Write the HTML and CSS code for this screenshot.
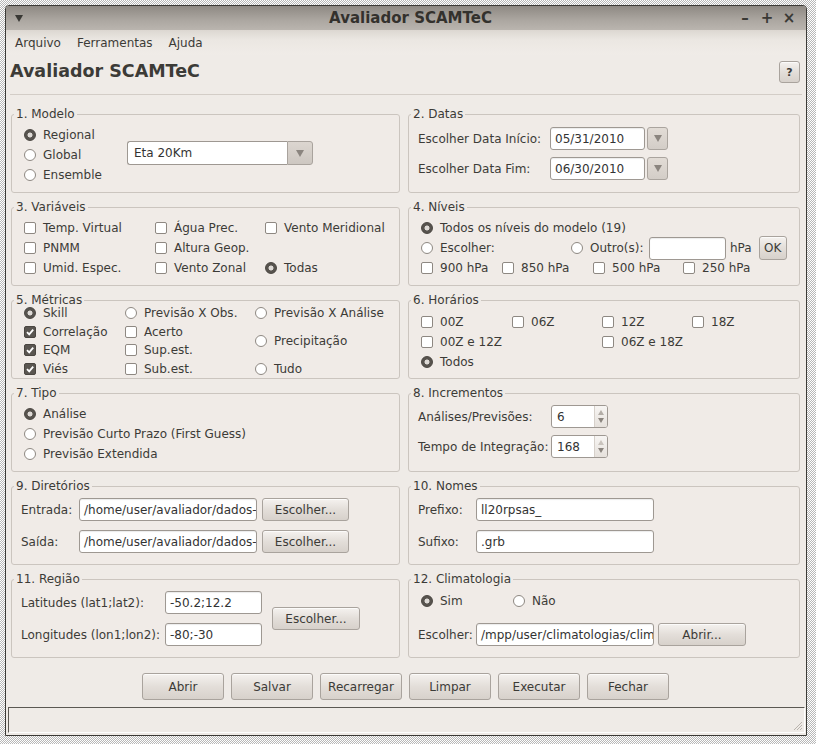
FILE: index.html
```html
<!DOCTYPE html>
<html lang="pt">
<head>
<meta charset="utf-8">
<title>Avaliador SCAMTeC</title>
<link rel="stylesheet" href="styles.css">
</head>
<body>
<div class="window">
  <div class="titlebar">
    <span class="tb-left"><svg width="8" height="7" viewBox="0 0 8 7"><path d="M0 0h8L4 7z" fill="#3a3935"/></svg></span>
    <span class="tb-title">Avaliador SCAMTeC</span>
    <span class="tb-ctrls"><span class="tb-c">&#8211;</span><span class="tb-c">+</span><span class="tb-c">&#215;</span></span>
  </div>
  <div class="menubar"><span>Arquivo</span><span>Ferramentas</span><span>Ajuda</span></div>
  <div class="main">
    <div class="header">
      <h1>Avaliador SCAMTeC</h1>
      <button class="btn help">?</button>
    </div>
    <div class="grid">
      <fieldset class="group">
        <legend>1. Modelo</legend>
        <div class="g1">
          <div class="rows g1-col">
            <div class="opt"><span class="radio on"></span>Regional</div>
            <div class="opt"><span class="radio"></span>Global</div>
            <div class="opt"><span class="radio"></span>Ensemble</div>
          </div>
          <div class="combo"><span class="combo-field">Eta 20Km</span><span class="combo-btn"><svg width="8" height="7" viewBox="0 0 8 7"><path d="M0 0h8L4 7z" fill="#8b857f"/></svg></span></div>
        </div>
      </fieldset>
      <fieldset class="group">
        <legend>2. Datas</legend>
        <div class="g2">
          <span class="lbl">Escolher Data Início:</span>
          <span class="field">05/31/2010</span>
          <span class="dd-btn"><svg width="8" height="7" viewBox="0 0 8 7"><path d="M0 0h8L4 7z" fill="#8b857f"/></svg></span>
          <span class="lbl">Escolher Data Fim:</span>
          <span class="field">06/30/2010</span>
          <span class="dd-btn"><svg width="8" height="7" viewBox="0 0 8 7"><path d="M0 0h8L4 7z" fill="#8b857f"/></svg></span>
        </div>
      </fieldset>
      <fieldset class="group">
        <legend>3. Variáveis</legend>
        <div class="g3">
          <div class="opt"><span class="check"></span>Temp. Virtual</div>
          <div class="opt"><span class="check"></span>Água Prec.</div>
          <div class="opt"><span class="check"></span>Vento Meridional</div>
          <div class="opt"><span class="check"></span>PNMM</div>
          <div class="opt"><span class="check"></span>Altura Geop.</div>
          <div></div>
          <div class="opt"><span class="check"></span>Umid. Espec.</div>
          <div class="opt"><span class="check"></span>Vento Zonal</div>
          <div class="opt"><span class="radio on"></span>Todas</div>
        </div>
      </fieldset>
      <fieldset class="group">
        <legend>4. Níveis</legend>
        <div class="g4">
          <div class="row"><div class="opt"><span class="radio on"></span>Todos os níveis do modelo (19)</div></div>
          <div class="row">
            <div class="opt w150"><span class="radio"></span>Escolher:</div>
            <div class="opt w78"><span class="radio"></span>Outro(s):</div>
            <span class="field f-outro"></span>
            <span class="hpa">hPa</span>
            <button class="btn ok">OK</button>
          </div>
          <div class="row">
            <div class="opt w81"><span class="check"></span>900 hPa</div>
            <div class="opt w91"><span class="check"></span>850 hPa</div>
            <div class="opt w90"><span class="check"></span>500 hPa</div>
            <div class="opt"><span class="check"></span>250 hPa</div>
          </div>
        </div>
      </fieldset>
      <fieldset class="group">
        <legend>5. Métricas</legend>
        <div class="g5">
          <div class="col c1">
            <div class="opt"><span class="radio on"></span>Skill</div>
            <div class="opt"><span class="check on"><svg width="10" height="10" viewBox="0 0 10 10"><path d="M2 5.2L4.2 7.4L8.2 2.6" stroke="#fff" stroke-width="1.8" fill="none"/></svg></span>Correlação</div>
            <div class="opt"><span class="check on"><svg width="10" height="10" viewBox="0 0 10 10"><path d="M2 5.2L4.2 7.4L8.2 2.6" stroke="#fff" stroke-width="1.8" fill="none"/></svg></span>EQM</div>
            <div class="opt"><span class="check on"><svg width="10" height="10" viewBox="0 0 10 10"><path d="M2 5.2L4.2 7.4L8.2 2.6" stroke="#fff" stroke-width="1.8" fill="none"/></svg></span>Viés</div>
          </div>
          <div class="col c2">
            <div class="opt"><span class="radio"></span>Previsão X Obs.</div>
            <div class="opt"><span class="check"></span>Acerto</div>
            <div class="opt"><span class="check"></span>Sup.est.</div>
            <div class="opt"><span class="check"></span>Sub.est.</div>
          </div>
          <div class="col c3">
            <div class="opt"><span class="radio"></span>Previsão X Análise</div>
            <div class="opt"><span class="radio"></span>Precipitação</div>
            <div class="opt"><span class="radio"></span>Tudo</div>
          </div>
        </div>
      </fieldset>
      <fieldset class="group">
        <legend>6. Horários</legend>
        <div class="g6">
          <div class="opt"><span class="check"></span>00Z</div>
          <div class="opt"><span class="check"></span>06Z</div>
          <div class="opt"><span class="check"></span>12Z</div>
          <div class="opt"><span class="check"></span>18Z</div>
          <div class="opt span2"><span class="check"></span>00Z e 12Z</div>
          <div class="opt span2"><span class="check"></span>06Z e 18Z</div>
          <div class="opt"><span class="radio on"></span>Todos</div>
        </div>
      </fieldset>
      <fieldset class="group">
        <legend>7. Tipo</legend>
        <div class="rows g7">
          <div class="opt"><span class="radio on"></span>Análise</div>
          <div class="opt"><span class="radio"></span>Previsão Curto Prazo (First Guess)</div>
          <div class="opt"><span class="radio"></span>Previsão Extendida</div>
        </div>
      </fieldset>
      <fieldset class="group">
        <legend>8. Incrementos</legend>
        <div class="g8">
          <span class="lbl">Análises/Previsões:</span>
          <span class="spin"><span class="spin-val">6</span><span class="spin-arrows"><svg width="6" height="5" viewBox="0 0 6 5"><path d="M0 5h6L3 0z" fill="#b3ada7"/></svg><svg width="6" height="5" viewBox="0 0 6 5"><path d="M0 0h6L3 5z" fill="#8b857f"/></svg></span></span>
          <span class="lbl">Tempo de Integração:</span>
          <span class="spin"><span class="spin-val">168</span><span class="spin-arrows"><svg width="6" height="5" viewBox="0 0 6 5"><path d="M0 5h6L3 0z" fill="#c9c3bd"/></svg><svg width="6" height="5" viewBox="0 0 6 5"><path d="M0 0h6L3 5z" fill="#8b857f"/></svg></span></span>
        </div>
      </fieldset>
      <fieldset class="group">
        <legend>9. Diretórios</legend>
        <div class="g9">
          <span class="lbl">Entrada:</span>
          <span class="field">/home/user/avaliador/dados-</span>
          <button class="btn choose">Escolher...</button>
          <span class="lbl">Saída:</span>
          <span class="field">/home/user/avaliador/dados-</span>
          <button class="btn choose">Escolher...</button>
        </div>
      </fieldset>
      <fieldset class="group">
        <legend>10. Nomes</legend>
        <div class="g10">
          <span class="lbl">Prefixo:</span>
          <span class="field">ll20rpsas_</span>
          <span class="lbl">Sufixo:</span>
          <span class="field">.grb</span>
        </div>
      </fieldset>
      <fieldset class="group">
        <legend>11. Região</legend>
        <div class="g11">
          <span class="lbl">Latitudes (lat1;lat2):</span>
          <span class="field">-50.2;12.2</span>
          <button class="btn choose reg">Escolher...</button>
          <span class="lbl">Longitudes (lon1;lon2):</span>
          <span class="field">-80;-30</span>
        </div>
      </fieldset>
      <fieldset class="group">
        <legend>12. Climatologia</legend>
        <div class="g12">
          <div class="row r-clim">
            <div class="opt w92"><span class="radio on"></span>Sim</div>
            <div class="opt"><span class="radio"></span>Não</div>
          </div>
          <div class="g12-form">
            <span class="lbl">Escolher:</span>
            <span class="field">/mpp/user/climatologias/clim</span>
            <button class="btn open">Abrir...</button>
          </div>
        </div>
      </fieldset>
    </div>
    <div class="actions">
      <button class="btn act">Abrir</button>
      <button class="btn act">Salvar</button>
      <button class="btn act">Recarregar</button>
      <button class="btn act">Limpar</button>
      <button class="btn act">Executar</button>
      <button class="btn act">Fechar</button>
    </div>
  </div>
  <div class="statusbar"><svg class="grip" width="10" height="10" viewBox="0 0 10 10"><path d="M9 1L1 9M9 4L4 9M9 7L7 9" stroke="#b9b3ad" stroke-width="1"/></svg></div>
</div>
</body>
</html>
```

FILE: styles.css
```css
* { box-sizing: border-box; }
html, body { margin: 0; padding: 0; }
body {
  width: 816px;
  height: 744px;
  overflow: hidden;
  font-family: "DejaVu Sans", "Noto Sans", sans-serif;
  font-size: 12px;
  color: #3c3b37;
  background: repeating-conic-gradient(#b8b8b8 0 25%, #ffffff 0 50%) 0 0 / 2px 2px;
}
.window {
  margin: 5px 0 0 5px;
  width: 802px;
  height: 731px;
  border: 1px solid #3b3a36;
  border-radius: 4px 4px 0 0;
  background: #efebe7;
  display: flex;
  flex-direction: column;
  overflow: hidden;
}
.titlebar {
  flex: none;
  height: 24px;
  display: grid;
  grid-template-columns: 1fr auto 1fr;
  align-items: center;
  background: linear-gradient(#8e8983, #aca7a1 60%, #bab5af);
  padding: 0 6px 0 9px;
}
.tb-left { display: flex; align-items: center; }
.tb-title { font-weight: bold; font-size: 15px; color: #33312d; margin-left: 6px; }
.tb-ctrls { display: flex; justify-content: flex-end; }
.tb-c { width: 22px; text-align: center; font-weight: bold; font-size: 15px; color: #3a3935; line-height: 20px; }
.menubar {
  flex: none;
  height: 25px;
  display: flex;
  align-items: center;
  gap: 16px;
  padding: 0 0 0 9px;
  background: linear-gradient(#dcd7d1, #ebe7e2 40%, #f0ece8);
  font-size: 12px;
}
.main { flex: none; padding: 0 6px 0 5px; }
.header {
  height: 40px;
  margin: 0 -2px 0 -1px;
  border-bottom: 1px solid #d3cdc7;
  display: flex;
  justify-content: space-between;
  align-items: flex-start;
}
h1 {
  margin: 6px 0 0 0;
  font-size: 17.5px;
  line-height: 21px;
  font-weight: bold;
  color: #3c3b37;
}
.btn {
  font-family: "DejaVu Sans", "Noto Sans", sans-serif;
  font-size: 12px;
  color: #3c3b37;
  background: linear-gradient(#f5f2ef, #e3ded9 50%, #d7d1cb);
  border: 1px solid #a9a39d;
  border-radius: 3px;
  padding: 0;
  box-shadow: inset 0 1px 0 rgba(255,255,255,0.7);
}
.help {
  margin: 6px 2px 0 0;
  width: 21px;
  height: 22px;
  font-weight: bold;
  font-size: 11px;
}
.grid {
  margin-top: 12px;
  display: grid;
  grid-template-columns: 389px 392px;
  grid-template-rows: repeat(6, 86px);
  column-gap: 8px;
  row-gap: 7px;
}
.group {
  margin: 0;
  padding: 0;
  min-width: 0;
  height: 86px;
  border: 1px solid #cbc5bf;
  border-radius: 3px;
  background: #f0ebe7;
}
legend {
  padding: 0 2px;
  margin-left: 2px;
  font-size: 12px;
  line-height: 14px;
  color: #3c3b37;
}
.opt {
  display: flex;
  align-items: center;
  gap: 7px;
  white-space: nowrap;
  height: 20px;
}
.radio {
  flex: none;
  width: 12px;
  height: 12px;
  border-radius: 50%;
  border: 1px solid #8e8882;
  background: #ffffff;
}
.radio.on {
  border-color: #4a4641;
  background: radial-gradient(circle, #dedad6 0 2.2px, #57534e 2.8px);
}
.check {
  flex: none;
  width: 12px;
  height: 12px;
  border-radius: 2px;
  border: 1px solid #8e8882;
  background: #ffffff;
  display: flex;
  align-items: center;
  justify-content: center;
}
.check.on { background: #5a5651; border-color: #4a4641; }
.field {
  display: flex;
  align-items: center;
  height: 23px;
  background: #ffffff;
  border: 1px solid #9e9892;
  border-radius: 3px;
  padding-left: 4px;
  overflow: hidden;
  white-space: nowrap;
  color: #333333;
  box-shadow: inset 0 1px 1px rgba(0,0,0,0.08);
}
.lbl { white-space: nowrap; }

/* 1 */
.g1 { display: flex; padding: 4px 0 0 12px; }
.g1-col { width: 103px; }
.combo { margin-top: 16px; width: 186px; height: 24px; display: flex; }
.combo-field {
  flex: 1;
  display: flex;
  align-items: center;
  padding-left: 6px;
  background: #ffffff;
  border: 1px solid #9e9892;
  border-right: none;
  border-radius: 3px 0 0 3px;
  color: #333333;
}
.combo-btn {
  width: 26px;
  display: flex;
  align-items: center;
  justify-content: center;
  background: linear-gradient(#dcd6d0, #cdc7c1);
  border: 1px solid #a9a39d;
  border-radius: 0 3px 3px 0;
}
/* 2 */
.g2 {
  display: grid;
  grid-template-columns: 130px 95px 21px;
  grid-auto-rows: 23px;
  column-gap: 2px;
  row-gap: 7px;
  align-items: center;
  padding: 6px 0 0 9px;
}
.dd-btn {
  height: 23px;
  display: flex;
  align-items: center;
  justify-content: center;
  background: linear-gradient(#e2dcd6, #d3cdc7);
  border: 1px solid #aaa49e;
  border-radius: 3px;
}
/* 3 */
.g3 {
  display: grid;
  grid-template-columns: 131px 110px 1fr;
  grid-auto-rows: 20px;
  padding: 4px 0 0 12px;
}
/* 4 */
.g4 { padding: 4px 0 0 12px; }
.row { height: 20px; display: flex; align-items: center; }
.w150 { width: 150px; }
.w78 { width: 78px; }
.w81 { width: 81px; }
.w91 { width: 91px; }
.w90 { width: 90px; }
.w92 { width: 92px; }
.f-outro { width: 77px; flex: none; }
.hpa { margin-left: 4px; }
.ok { margin-left: 7px; width: 28px; height: 24px; flex: none; }
/* 5 */
.g5 { display: flex; margin-top: -1px; height: 70px; padding-left: 12px; }
.g5 .col { display: flex; flex-direction: column; justify-content: space-between; }
.g5 .opt { height: 14px; }
.c1 { width: 101px; }
.c2 { width: 130px; }
/* 6 */
.g6 {
  display: grid;
  grid-template-columns: 91px 90px 90px 1fr;
  grid-auto-rows: 20px;
  padding: 5px 0 0 12px;
}
.span2 { grid-column: span 2; }
/* 7 */
.g7 { padding: 4px 0 0 12px; }
/* 8 */
.g8 {
  display: grid;
  grid-template-columns: 133px 57px;
  grid-auto-rows: 23px;
  row-gap: 7px;
  align-items: center;
  padding: 5px 0 0 9px;
}
.spin {
  display: flex;
  height: 23px;
  background: #ffffff;
  border: 1px solid #9e9892;
  border-radius: 3px;
  overflow: hidden;
}
.spin-val { flex: 1; display: flex; align-items: center; padding-left: 5px; color: #333333; }
.spin-arrows {
  width: 13px;
  display: flex;
  flex-direction: column;
  justify-content: space-around;
  align-items: center;
  border-left: 1px solid #d6d0ca;
  background: linear-gradient(#f7f5f3, #e6e1dc);
  padding: 2px 0;
}
/* 9 */
.g9 {
  display: grid;
  grid-template-columns: 58px 178px 92px;
  grid-auto-rows: 23px;
  row-gap: 9px;
  align-items: center;
  padding: 5px 0 0 9px;
}
.choose { margin-left: 5px; width: 87px; height: 23px; }
/* 10 */
.g10 {
  display: grid;
  grid-template-columns: 58px 178px;
  grid-auto-rows: 23px;
  row-gap: 9px;
  align-items: center;
  padding: 5px 0 0 9px;
}
/* 11 */
.g11 {
  display: grid;
  grid-template-columns: 144px 97px 98px;
  grid-auto-rows: 23px;
  row-gap: 9px;
  align-items: center;
  padding: 5px 0 0 9px;
}
.reg { grid-column: 3; grid-row: 1 / 3; align-self: center; margin-left: 10px; width: 88px; }
/* 12 */
.g12 { padding: 5px 0 0 9px; }
.r-clim { padding-left: 3px; }
.g12-form {
  margin-top: 12px;
  display: grid;
  grid-template-columns: 58px 178px 92px;
  grid-auto-rows: 23px;
  align-items: center;
}
.open { margin-left: 4px; width: 88px; height: 23px; }
/* actions */
.actions {
  margin-top: 15px;
  display: flex;
  justify-content: center;
  gap: 7px;
}
.act { width: 82px; height: 27px; }
.statusbar {
  margin: auto 1px 2px 2px;
  height: 26px;
  border-top: 1px solid #5b5953;
  border-left: 1px solid #5b5953;
  border-right: 1px solid #ffffff;
  border-bottom: 1px solid #ffffff;
  display: flex;
  justify-content: flex-end;
  align-items: flex-end;
}
.grip { margin: 0 1px 1px 0; }
```
